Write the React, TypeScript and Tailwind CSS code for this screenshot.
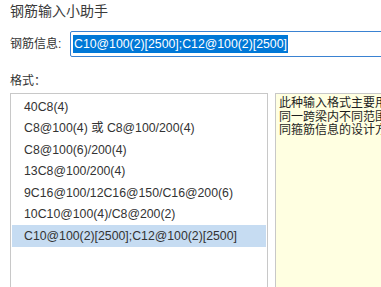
import React from "react";

const formats: string[] = [
  "40C8(4)",
  "C8@100(4) 或 C8@100/200(4)",
  "C8@100(6)/200(4)",
  "13C8@100/200(4)",
  "9C16@100/12C16@150/C16@200(6)",
  "10C10@100(4)/C8@200(2)",
  "C10@100(2)[2500];C12@100(2)[2500]",
];

const App: React.FC = () => {
  const selected = formats.length - 1;

  return (
    <div
      className="w-[381px] h-[287px] overflow-hidden bg-white text-[#333]"
      style={{ fontFamily: '"Liberation Sans", "Noto Sans CJK SC", sans-serif' }}
    >
      <div className="pl-[10px] pt-[1px] h-[31px] text-[14px] leading-[20px] text-[#3a3a3a]">
        钢筋输入小助手
      </div>

      <div className="flex items-center h-[26px]">
        <div className="w-[70px] shrink-0 pl-[10px] text-[12px] leading-[16px] whitespace-nowrap">钢筋信息:</div>
        <div className="flex items-center h-[26px] w-[330px] shrink-0 border border-[#3a82d2] rounded-[2px] pl-[2px]">
          <span className="bg-[#0078d7] text-white text-[12.3px] leading-[18px] px-[1px] whitespace-nowrap">
            C10@100(2)[2500];C12@100(2)[2500]
          </span>
        </div>
      </div>

      <div className="pl-[10px] pt-[16px] h-[36px] text-[12px] leading-[16px]">格式：</div>

      <div className="flex gap-[7px] pl-[10px]">
        <div className="w-[258px] h-[220px] shrink-0 border border-[#c8c8c8] pt-[2px] px-[1px]">
          {formats.map((f, i) => (
            <div
              key={f}
              className={
                i === selected
                  ? "h-[21.5px] flex items-center pl-[12px] bg-[#c6dcf2] text-[12.3px] whitespace-nowrap"
                  : "h-[21.5px] flex items-center pl-[12px] text-[12.3px] whitespace-nowrap"
              }
            >
              {f}
            </div>
          ))}
        </div>

        <div className="w-[140px] h-[220px] shrink-0 border border-[#c8c8c8] bg-[#ffffe1] pt-[3px] pl-[3px] text-[12px] leading-[13.5px] text-[#1e1e1e]">
          <div className="whitespace-nowrap">此种输入格式主要用于</div>
          <div className="whitespace-nowrap">同一跨梁内不同范围设置</div>
          <div className="whitespace-nowrap">同箍筋信息的设计方式。</div>
        </div>
      </div>
    </div>
  );
};

export default App;
